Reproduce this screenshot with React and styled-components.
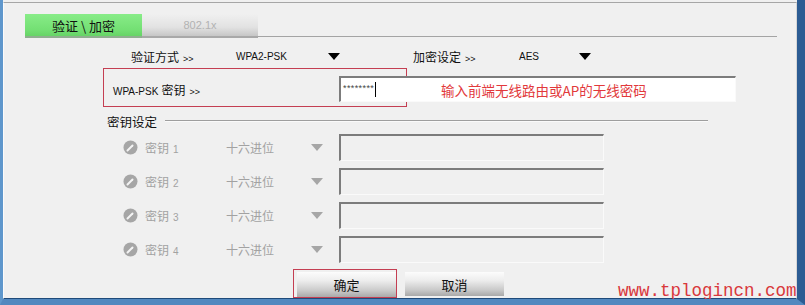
import React from 'react';
import styled, { createGlobalStyle } from 'styled-components';

const Global = createGlobalStyle`
  html, body { margin: 0; padding: 0; background: #f0f0f0; overflow: hidden; }
  body { font-family: "Noto Sans CJK SC", "Noto Sans", sans-serif; }
`;

const Window = styled.div`
  position: relative;
  width: 805px;
  height: 305px;
  box-sizing: border-box;
  background: #f0f0f0;
  border-left: 3px solid #5f97cc;
  border-right: 8px solid #2c5c93;
  border-bottom: 6px solid #5288bf;
  padding-top: 2px;
  display: flex;
  flex-direction: column;
  overflow: hidden;
`;

const Panel = styled.div`
  flex: 1;
  display: flex;
  flex-direction: column;
  border-top: 1px solid #a6a6a6;
  border-left: 1px solid #fbfbfb;
  border-right: 1px solid #d6d6d6;
  border-bottom: 1px solid #1f4a7a;
`;

const TabBar = styled.div`
  display: flex;
  align-items: stretch;
  margin: 11px 0 0 21px;
  height: 24px;
`;

const Tab = styled.div`
  width: ${p => p.$w}px;
  box-sizing: border-box;
  display: flex;
  align-items: center;
  justify-content: center;
  font-size: ${p => (p.$active ? 13 : 11)}px;
  color: ${p => (p.$active ? '#111' : '#b2b2b2')};
  font-family: ${p => (p.$active ? '"Noto Sans CJK SC", sans-serif' : '"Liberation Sans", sans-serif')};
  background: ${p =>
    p.$active
      ? 'linear-gradient(#88ec88, #74e074 70%, #66d466)'
      : 'linear-gradient(#f0f0f0, #e2e2e2 60%, #c6c6c6)'};
  border-bottom: 2px solid ${p => (p.$active ? '#8fae8f' : '#a8a8a8')};
`;

const TabLine = styled.div`
  width: 519px;
  border-bottom: 1px solid #a4a4a4;
  margin-bottom: 1px;
`;

const ModeRow = styled.div`
  display: grid;
  grid-template-columns: 105px 92px 85px 106px 60px 12px;
  align-items: center;
  height: 18px;
  margin: 9px 0 0 127px;
`;

const Label = styled.span`
  font-size: 12px;
  color: ${p => (p.$muted ? '#a2a2a2' : '#111')};
  white-space: nowrap;
`;

const Chevrons = styled.span`
  font-family: "Liberation Sans", sans-serif;
  font-size: 9px;
  margin-left: 4px;
`;

const Value = styled.span`
  font-family: "Liberation Sans", sans-serif;
  font-size: 10px;
  color: #111;
`;

const Caret = styled.span`
  width: 0;
  height: 0;
  border-left: 6px solid transparent;
  border-right: 6px solid transparent;
  border-top: 7px solid ${p => (p.$muted ? '#a6a6a6' : '#000')};
`;

const PskRow = styled.div`
  position: relative;
  display: grid;
  grid-template-columns: 226px 397px;
  align-items: center;
  height: 39px;
  box-sizing: border-box;
  padding: 8px 0 5px 109px;
  margin-top: 3px;
`;

const Highlight = styled.div`
  position: absolute;
  left: 99px;
  top: 0;
  width: 304px;
  height: 39px;
  box-sizing: border-box;
  border: 1px solid #c43e52;
  pointer-events: none;
`;

const PskLabel = styled.span`
  font-size: 12px;
  color: #111;
  white-space: nowrap;
`;

const Latin = styled.span`
  font-family: "Liberation Sans", sans-serif;
  font-size: 10px;
  margin-right: 3px;
`;

const Field = styled.div`
  position: relative;
  height: ${p => p.$h}px;
  box-sizing: border-box;
  background: ${p => (p.$disabled ? '#f0f0f0' : '#fff')};
  border-top: 2px solid #7c7c7c;
  border-left: 2px solid #7c7c7c;
  border-right: 1px solid #fafafa;
  border-bottom: 1px solid #fafafa;
  display: flex;
  align-items: center;
  padding-left: 2px;
`;

const Masked = styled.span`
  font-family: "Liberation Sans", sans-serif;
  font-size: 9px;
  letter-spacing: 0.4px;
  color: #444;
  margin-top: -3px;
`;

const Cursor = styled.span`
  width: 1px;
  height: 15px;
  background: #000;
  margin-left: 1px;
`;

const Hint = styled.span`
  position: absolute;
  left: 100px;
  font-size: 13.5px;
  color: #e2393b;
  white-space: nowrap;
`;

const SectionHead = styled.div`
  display: flex;
  align-items: center;
  gap: 8px;
  height: 16px;
  margin: 6px 0 0 103px;
`;

const SectionTitle = styled.span`
  font-size: 12.5px;
  color: #111;
`;

const Rule = styled.div`
  width: 543px;
  border-top: 1px solid #9e9e9e;
  border-bottom: 1px solid #fafafa;
`;

const KeyList = styled.div`
  display: flex;
  flex-direction: column;
  gap: 7px;
  margin: 5px 0 0 119px;
`;

const KeyRow = styled.div`
  display: grid;
  grid-template-columns: 22px 81px 85px 28px 265px;
  align-items: center;
  height: 27px;
`;

const Num = styled.span`
  font-family: "Liberation Sans", sans-serif;
  font-size: 10px;
  margin-left: 4px;
`;

const Buttons = styled.div`
  display: flex;
  align-items: flex-start;
  gap: 8px;
  margin: 6px 0 0 289px;
`;

const FocusFrame = styled.div`
  width: 104px;
  height: 29px;
  box-sizing: border-box;
  border: 1px solid #c43e52;
  padding: 2px 0 0 3px;
`;

const Button = styled.div`
  width: 99px;
  height: ${p => p.$h}px;
  margin-top: ${p => p.$mt || 0}px;
  display: flex;
  align-items: center;
  justify-content: center;
  font-size: 13px;
  color: #111;
  background: linear-gradient(#fcfcfc, #ededed 35%, #c9c9c9 75%, #a9a9a9);
`;

const Watermark = styled.span`
  position: absolute;
  left: 615px;
  top: 280px;
  font-family: "Liberation Mono", "DejaVu Sans Mono", monospace;
  font-size: 17.5px;
  line-height: 22px;
  color: #d9383c;
  white-space: nowrap;
`;

const Radio = () => (
  <svg width="15" height="15" viewBox="0 0 15 15">
    <circle cx="7.5" cy="7.5" r="7" fill="#a6a6a6" />
    <path d="M4.5 10.5 L9.5 5.5" stroke="#f4f4f4" strokeWidth="2" strokeLinecap="round" />
  </svg>
);

const keys = [1, 2, 3, 4];

export default function App() {
  return (
    <>
      <Global />
      <Window>
        <Panel>
          <TabBar>
            <Tab $active $w={117}>验证 \ 加密</Tab>
            <Tab $w={116}>802.1x</Tab>
            <TabLine />
          </TabBar>

          <ModeRow>
            <Label>验证方式<Chevrons>&gt;&gt;</Chevrons></Label>
            <Value>WPA2-PSK</Value>
            <Caret />
            <Label>加密设定<Chevrons>&gt;&gt;</Chevrons></Label>
            <Value>AES</Value>
            <Caret />
          </ModeRow>

          <PskRow>
            <Highlight />
            <PskLabel><Latin>WPA-PSK</Latin>密钥<Chevrons>&gt;&gt;</Chevrons></PskLabel>
            <Field $h={26}>
              <Masked>********</Masked>
              <Cursor />
              <Hint>输入前端无线路由或AP的无线密码</Hint>
            </Field>
          </PskRow>

          <SectionHead>
            <SectionTitle>密钥设定</SectionTitle>
            <Rule />
          </SectionHead>

          <KeyList>
            {keys.map(k => (
              <KeyRow key={k}>
                <Radio />
                <Label $muted>密钥<Num>{k}</Num></Label>
                <Label $muted>十六进位</Label>
                <Caret $muted />
                <Field $h={27} $disabled />
              </KeyRow>
            ))}
          </KeyList>

          <Buttons>
            <FocusFrame>
              <Button $h={25}>确定</Button>
            </FocusFrame>
            <Button $h={24} $mt={3}>取消</Button>
          </Buttons>
        </Panel>
        <Watermark>www.tplogincn.com</Watermark>
      </Window>
    </>
  );
}
